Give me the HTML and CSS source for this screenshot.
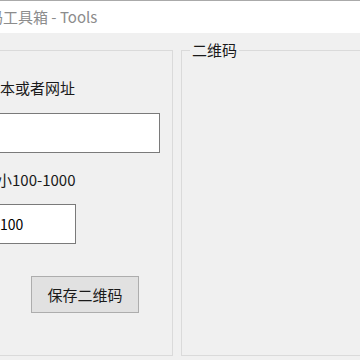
FILE: index.html
```html
<!DOCTYPE html>
<html lang="zh">
<head>
    <meta charset="UTF-8">
    <meta name="viewport" content="width=device-width, initial-scale=1.0">
    <title>工具箱 - Tools</title>
    <link rel="stylesheet" href="styles.css">
</head>
<body>
    <div class="titlebar">
        <span class="title">二维码工具箱 - Tools</span>
    </div>
    <div class="main">
        <fieldset class="group left">
            <label class="label label-text" for="wenben">文本或者网址</label>
            <input type="text" id="wenben" class="input input-text">
            <label class="label label-size" for="daxiao">大小100-1000</label>
            <input type="text" id="daxiao" class="input input-size" value="100">
            <button class="gumb" id="shrani">保存二维码</button>
        </fieldset>
        <fieldset class="group right">
            <legend class="legend">二维码</legend>
        </fieldset>
    </div>
</body>
</html>
```

FILE: styles.css
```css
body {
    margin: 0;
    width: 360px;
    height: 360px;
    overflow: hidden;
    background-color: #f0f0f0;
    font-family: "Noto Sans CJK SC", "Liberation Sans", sans-serif;
    font-size: 15px;
    color: #1a1a1a;
}

.titlebar {
    height: 32px;
    border-top: 1px solid #aaaaaa;
    background-color: #ffffff;
    display: flex;
    align-items: center;
    overflow: hidden;
}

.title {
    margin-left: -42px;
    color: #8c8c8c;
    line-height: 20px;
    white-space: nowrap;
}

.main {
    display: flex;
    gap: 8px;
    height: 327px;
    padding-top: 7px;
    padding-bottom: 4px;
    box-sizing: border-box;
}

.group {
    margin: 0;
    border: 1px solid #dadada;
    box-sizing: border-box;
    min-width: 0;
}

.left {
    margin-left: -40px;
    margin-top: 10px;
    width: 213px;
    flex-shrink: 0;
    padding: 27px 0 0 10px;
    display: flex;
    flex-direction: column;
    align-items: flex-start;
}

.right {
    width: 260px;
    flex-shrink: 0;
    padding: 0 0 0 8px;
}

.legend {
    padding: 0 2px;
    line-height: 20px;
}

.label {
    line-height: 20px;
    white-space: nowrap;
}

.label-text {
    margin-left: 14px;
}

.label-size {
    margin-top: 17px;
    margin-left: 11px;
}

.input {
    height: 40px;
    box-sizing: border-box;
    border: 1px solid #7a7a7a;
    background-color: #ffffff;
    font-family: inherit;
    font-size: 14px;
    color: #000;
    outline: none;
}

.input-text {
    margin-top: 15px;
    width: 189px;
}

.input-size {
    margin-top: 14px;
    width: 105px;
    padding-left: 28px;
}

.gumb {
    margin-top: 32px;
    margin-left: 60px;
    width: 108px;
    height: 37px;
    box-sizing: border-box;
    border: 1px solid #adadad;
    background-color: #e1e1e1;
    font-family: inherit;
    font-size: 15px;
    color: #1a1a1a;
    padding: 0;
    cursor: pointer;
}

.gumb:hover {
    background-color: #e5f1fb;
    border-color: #0078d7;
}
```
